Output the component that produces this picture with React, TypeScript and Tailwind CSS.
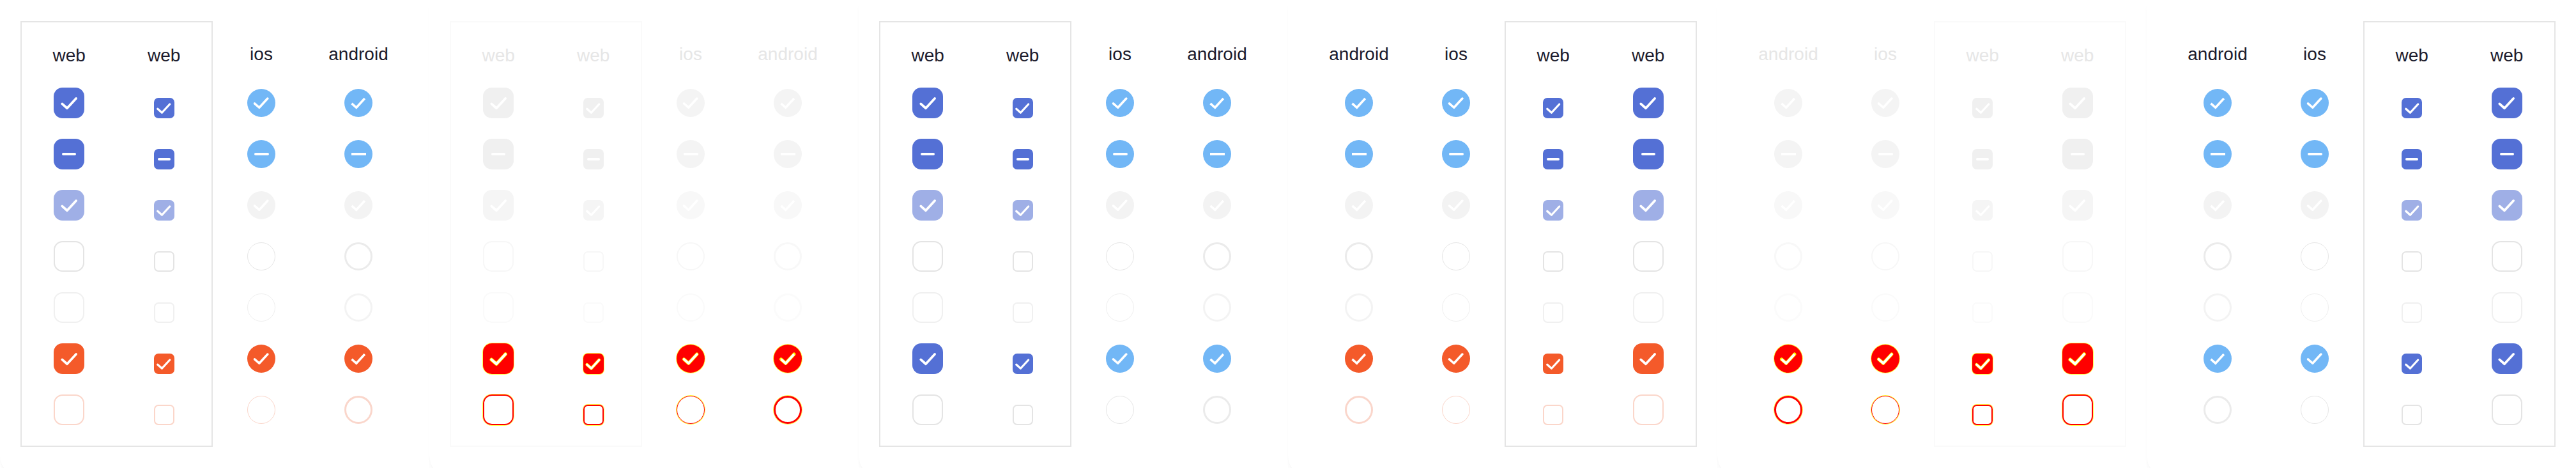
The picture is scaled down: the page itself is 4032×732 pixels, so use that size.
import React from 'react';

type Variant = 'orange' | 'blue' | 'faded';
type Kind = 'lg' | 'sm' | 'ios' | 'android';
type State =
  | 'checked'
  | 'mixed'
  | 'disabledChecked'
  | 'unchecked'
  | 'disabledUnchecked'
  | 'errorChecked'
  | 'errorUnchecked';

interface PanelProps {
  variant: Variant;
  dir: 'ltr' | 'rtl';
}

const isRound = (kind: Kind) => kind === 'ios' || kind === 'android';

function rowsFor(variant: Variant): State[] {
  const base: State[] = ['checked', 'mixed', 'disabledChecked', 'unchecked', 'disabledUnchecked'];
  if (variant === 'blue') return [...base, 'checked', 'unchecked'];
  return [...base, 'errorChecked', 'errorUnchecked'];
}

function shapeClass(kind: Kind) {
  if (kind === 'lg') return 'w-[48px] h-[48px] rounded-[14px]';
  if (kind === 'sm') return 'w-[32px] h-[32px] rounded-[7px]';
  return 'w-[44px] h-[44px] rounded-full';
}

function fillClass(variant: Variant, kind: Kind, state: State) {
  const round = isRound(kind);
  if (variant === 'faded') {
    switch (state) {
      case 'checked':
      case 'mixed':
        return round ? 'bg-[#f4f4f4]' : 'bg-[#f0f0f0]';
      case 'disabledChecked':
        return round ? 'bg-[#f8f8f8]' : 'bg-[#f5f5f5]';
      case 'unchecked':
        return kind === 'android' ? 'border-[3.5px] border-[#f8f8f8]' : 'border-2 border-[#f7f7f7]';
      case 'disabledUnchecked':
        return kind === 'android' ? 'border-[3.5px] border-[#fbfbfb]' : 'border-2 border-[#fafafa]';
      case 'errorChecked':
        return 'bg-[#ff0000] ring-1 ring-[#ffff00]/70';
      case 'errorUnchecked':
        if (kind === 'android') return 'border-[3.5px] border-[#ff0000] ring-1 ring-[#ffff00]/70';
        if (kind === 'ios') return 'border-[1.5px] border-[#ff0000] ring-1 ring-[#ffff00]/80';
        return 'border-2 border-[#ff0000] ring-1 ring-[#ffff00]/70';
    }
  }
  switch (state) {
    case 'checked':
    case 'mixed':
      return round ? 'bg-[#72b7f6]' : 'bg-[#5470d5]';
    case 'disabledChecked':
      return round ? 'bg-[#f3f3f3]' : 'bg-[#9fafe6]';
    case 'unchecked':
      if (kind === 'android') return 'border-[3.5px] border-[#ebebeb]';
      if (kind === 'ios') return 'border-[1.5px] border-[#e6e6e6]';
      return 'border-2 border-[#e4e4e4]';
    case 'disabledUnchecked':
      if (kind === 'android') return 'border-[3.5px] border-[#f3f3f3]';
      if (kind === 'ios') return 'border-[1.5px] border-[#efefef]';
      return 'border-2 border-[#f0f0f0]';
    case 'errorChecked':
      return 'bg-[#f45a2a]';
    case 'errorUnchecked':
      if (kind === 'android') return 'border-[3.5px] border-[#fad6cb]';
      if (kind === 'ios') return 'border-[1.5px] border-[#fbd6ca]';
      return 'border-2 border-[#fbd6ca]';
  }
}

function CheckMark({ kind, glow }: { kind: Kind; glow: boolean }) {
  const size = kind === 'lg' ? 45 : kind === 'sm' ? 39 : 42;
  const sharp = kind === 'android';
  const d = 'M6 12.5L10.15 16.15L17.65 8';
  return (
    <svg width={size} height={size} viewBox="0 0 24 24" fill="none" className="shrink-0">
      {glow && (
        <path d={d} stroke="#ffff00" strokeWidth={2.9} strokeLinecap="round" strokeLinejoin="round" />
      )}
      <path
        d={d}
        stroke="#ffffff"
        strokeWidth={2}
        strokeLinecap={sharp ? 'butt' : 'round'}
        strokeLinejoin={sharp ? 'miter' : 'round'}
      />
    </svg>
  );
}

function MinusMark({ kind }: { kind: Kind }) {
  if (kind === 'lg') return <div className="w-[22px] h-[4px] rounded-full bg-white shrink-0" />;
  if (kind === 'sm') return <div className="w-[20px] h-[4px] rounded-full bg-white shrink-0" />;
  if (kind === 'ios') return <div className="w-[23px] h-[4.5px] rounded-full bg-white shrink-0" />;
  return <div className="w-[23px] h-[4px] bg-white shrink-0" />;
}

function Checkbox({ variant, kind, state }: { variant: Variant; kind: Kind; state: State }) {
  const hasCheck = state === 'checked' || state === 'disabledChecked' || state === 'errorChecked';
  return (
    <div className={`flex items-center justify-center shrink-0 ${shapeClass(kind)} ${fillClass(variant, kind, state)}`}>
      {hasCheck && <CheckMark kind={kind} glow={variant === 'faded' && state === 'errorChecked'} />}
      {state === 'mixed' && <MinusMark kind={kind} />}
    </div>
  );
}

function Column({ label, kind, variant }: { label: string; kind: Kind; variant: Variant }) {
  const inner = kind === 'lg' || kind === 'sm';
  const textColor = variant === 'faded' ? 'text-[#e6e6e6]' : 'text-[#1c1b2d]';
  return (
    <div className={`flex flex-col items-center ${inner ? 'flex-1' : 'w-[152px] shrink-0'}`}>
      <div className={`h-[70px] pt-[36px] text-[28px] leading-[32px] ${textColor}`}>{label}</div>
      {rowsFor(variant).map((state, i) => (
        <div key={i} className="h-[80px] flex items-end justify-center">
          <Checkbox variant={variant} kind={kind} state={state} />
        </div>
      ))}
    </div>
  );
}

function Panel({ variant, dir }: PanelProps) {
  const frame = variant === 'faded' ? 'border-[#fafafa]' : 'border-[#e5e5e5]';
  return (
    <div
      dir={dir}
      className="relative w-[672px] h-[748px] shrink-0 bg-white rounded-bl-[36px] shadow-[0_6px_6px_-4px_rgba(0,0,0,0.1)] pt-[33px] ps-[32px] flex items-start"
    >
      <div className={`w-[301px] shrink-0 border-2 ${frame} flex pb-[32px]`}>
        <Column label="web" kind="lg" variant={variant} />
        <Column label="web" kind="sm" variant={variant} />
      </div>
      <Column label="ios" kind="ios" variant={variant} />
      <Column label="android" kind="android" variant={variant} />
    </div>
  );
}

const panels: PanelProps[] = [
  { variant: 'orange', dir: 'ltr' },
  { variant: 'faded', dir: 'ltr' },
  { variant: 'blue', dir: 'ltr' },
  { variant: 'orange', dir: 'rtl' },
  { variant: 'faded', dir: 'rtl' },
  { variant: 'blue', dir: 'rtl' },
];

export default function App() {
  return (
    <div className="flex w-[4032px] h-[732px] overflow-hidden bg-white font-['Liberation_Sans',Arial,sans-serif]">
      {panels.map((p, i) => (
        <Panel key={i} {...p} />
      ))}
    </div>
  );
}
